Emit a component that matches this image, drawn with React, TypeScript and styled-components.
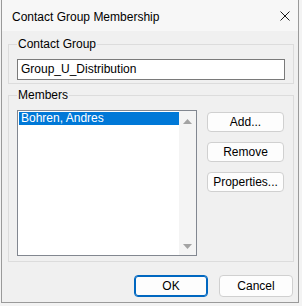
import styled, { createGlobalStyle } from "styled-components";

const GlobalStyle = createGlobalStyle`
  html, body {
    margin: 0;
    padding: 0;
    background: #f3f3f3;
  }
  body {
    font-family: "Liberation Sans", Arial, sans-serif;
    font-size: 12px;
    color: #000;
  }
`;

const Window = styled.div`
  box-sizing: border-box;
  margin-left: 1px;
  width: 298px;
  height: 303px;
  background: #f0f0f0;
  border: 1px solid #9a9a9a;
  border-top: none;
  display: flex;
  flex-direction: column;
`;

const TitleBar = styled.div`
  height: 31px;
  display: flex;
  align-items: center;
  justify-content: space-between;
  padding-left: 10px;
  background: #f7f7f7;
`;

const Title = styled.span`
  font-size: 12px;
  line-height: 16px;
  padding-top: 2px;
`;

const CloseButton = styled.div`
  width: 20px;
  height: 20px;
  margin-right: 3px;
  display: flex;
  align-items: center;
  justify-content: center;
`;

const Body = styled.div`
  flex: 1;
  display: flex;
  flex-direction: column;
  padding: 5px 4px 0 6px;
`;

const Group = styled.fieldset<{ $gap?: number }>`
  margin: ${(p) => p.$gap ?? 0}px 0 0 0;
  padding: 7px 8px 3px 8px;
  border: 1px solid #dcdcdc;
  min-width: 0;
`;

const GroupLabel = styled.legend`
  padding: 0 1px;
  line-height: 16px;
  font-size: 12px;
`;

const TextBox = styled.div`
  box-sizing: border-box;
  height: 21px;
  background: #fff;
  border: 1px solid #7a7a7a;
  padding-left: 3px;
  line-height: 19px;
`;

const MembersRow = styled.div`
  display: flex;
  gap: 10px;
  padding-bottom: 2px;
`;

const ListBox = styled.div`
  box-sizing: border-box;
  width: 180px;
  height: 146px;
  background: #fff;
  border: 1px solid #828790;
  display: flex;
`;

const ListItems = styled.div`
  flex: 1;
  padding: 1px 0 0 1px;
`;

const ListItem = styled.div<{ $selected?: boolean }>`
  height: 13px;
  line-height: 13px;
  padding-left: 2px;
  background: ${(p) => (p.$selected ? "#0078d7" : "transparent")};
  color: ${(p) => (p.$selected ? "#fff" : "#000")};
`;

const ScrollBar = styled.div`
  width: 17px;
  background: #f4f4f4;
  display: flex;
  flex-direction: column;
  justify-content: space-between;
  align-items: center;
  padding: 8px 0 6px;
`;

const ButtonColumn = styled.div`
  display: flex;
  flex-direction: column;
  gap: 10px;
  padding-top: 2px;
`;

const Button = styled.button<{ $width: number; $height: number; $default?: boolean }>`
  box-sizing: border-box;
  width: ${(p) => p.$width}px;
  height: ${(p) => p.$height}px;
  padding: 0;
  font-family: inherit;
  font-size: 12px;
  color: #000;
  background: #fdfdfd;
  border: 1px solid ${(p) => (p.$default ? "#0067c0" : "#d0d0d0")};
  border-radius: 4px;
  box-shadow: ${(p) => (p.$default ? "inset 0 0 0 1px #0067c0" : "none")};
`;

const Footer = styled.div`
  display: flex;
  justify-content: flex-end;
  gap: 11px;
  padding: 13px 1px 0 0;
`;

function Arrow({ down }: { down?: boolean }) {
  return (
    <svg width="9" height="5" viewBox="0 0 9 5">
      <polygon points={down ? "0,0 9,0 4.5,5" : "0,5 9,5 4.5,0"} fill="#a3a3a3" />
    </svg>
  );
}

export default function App() {
  return (
    <>
      <GlobalStyle />
      <Window>
        <TitleBar>
          <Title>Contact Group Membership</Title>
          <CloseButton>
            <svg width="10" height="10" viewBox="0 0 10 10">
              <path d="M0.5 0.5 L9.5 9.5 M9.5 0.5 L0.5 9.5" stroke="#1a1a1a" strokeWidth="1" />
            </svg>
          </CloseButton>
        </TitleBar>
        <Body>
          <Group>
            <GroupLabel>Contact Group</GroupLabel>
            <TextBox>Group_U_Distribution</TextBox>
          </Group>
          <Group $gap={3}>
            <GroupLabel>Members</GroupLabel>
            <MembersRow>
              <ListBox>
                <ListItems>
                  <ListItem $selected>Bohren, Andres</ListItem>
                </ListItems>
                <ScrollBar>
                  <Arrow />
                  <Arrow down />
                </ScrollBar>
              </ListBox>
              <ButtonColumn>
                <Button $width={77} $height={20}>Add...</Button>
                <Button $width={77} $height={20}>Remove</Button>
                <Button $width={77} $height={20}>Properties...</Button>
              </ButtonColumn>
            </MembersRow>
          </Group>
          <Footer>
            <Button $width={74} $height={22} $default>OK</Button>
            <Button $width={74} $height={22}>Cancel</Button>
          </Footer>
        </Body>
      </Window>
    </>
  );
}
